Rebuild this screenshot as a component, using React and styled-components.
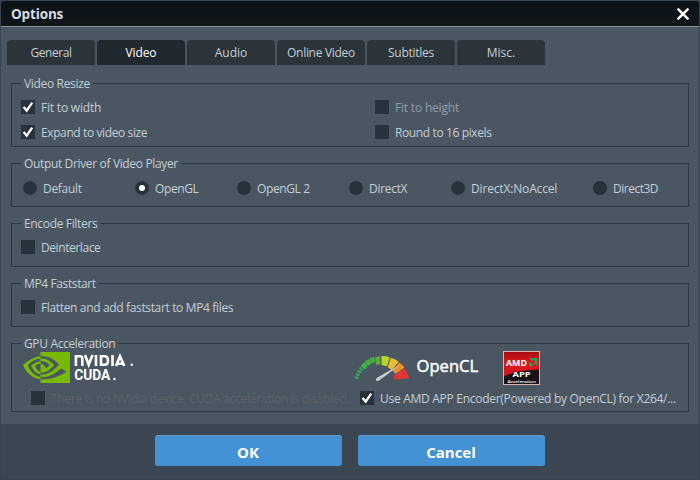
import React from 'react';
import styled, { createGlobalStyle } from 'styled-components';
import { SiNvidia } from 'react-icons/si';

const GlobalStyle = createGlobalStyle`
  body {
    margin: 0;
    background: #35424d;
    font: 12px/15px "Open Sans", "Noto Sans", sans-serif;
    color: #c4ced6;
  }
  * { box-sizing: border-box; }
`;

const Dialog = styled.div`
  width: 700px;
  height: 480px;
  padding: 1px;
  background: #37444f;
  display: flex;
  flex-direction: column;
`;

const TitleBar = styled.header`
  height: 26px;
  flex: none;
  padding: 0 9px 0 10px;
  display: flex;
  align-items: center;
  justify-content: space-between;
  background: linear-gradient(#0c1319, #10161a);
  border-bottom: 1px solid #8b9399;
  border-radius: 3px 3px 0 0;
`;

const Title = styled.h1`
  margin: 0;
  font-size: 13.5px;
  line-height: 20px;
  padding-top: 1px;
  font-weight: 700;
  letter-spacing: -0.15px;
  color: #d7dde0;
`;

const CloseButton = styled.button`
  width: 14px;
  height: 14px;
  padding: 0;
  border: 0;
  margin-top: 1px;
  background: none;
  color: #fff;
  display: block;
  svg { display: block; }
`;

const Body = styled.main`
  height: 397px;
  flex: none;
  padding: 13px 10px 0;
  background: #4a5763;
  border-right: 1px solid #45525d;
  display: flex;
  flex-direction: column;
`;

const TabBar = styled.nav`
  display: flex;
  gap: 2px;
  margin: 0 0 11px -4px;
`;

const Tab = styled.button`
  width: 88px;
  height: 25px;
  padding: 0;
  border: 0;
  border-radius: 4px 4px 0 0;
  font: inherit;
  letter-spacing: ${(p) => p.$track || 0}px;
  color: ${(p) => (p.$active ? '#ffffff' : '#c4ced4')};
  background: ${(p) => (p.$active ? '#20292f' : '#2a343a')};
`;

const Groups = styled.div`
  display: flex;
  flex-direction: column;
  gap: 9px;
`;

const Group = styled.fieldset`
  width: 678px;
  height: ${(p) => p.$height || 51}px;
  min-width: 0;
  margin: 0;
  padding: 0 9px;
  border: 1px solid #2a3741;
`;

const Legend = styled.legend`
  height: 15px;
  margin: 0;
  padding: 0 3px;
  line-height: 15px;
  letter-spacing: ${(p) => p.$track}px;
`;

const CheckGrid = styled.div`
  display: grid;
  grid-template-columns: 354px 1fr;
  grid-auto-rows: 24px;
  row-gap: 1px;
  padding-top: 4px;
`;

const RadioGrid = styled.div`
  display: grid;
  grid-template-columns: 112px 102px 112px 102px 142px 1fr;
  grid-auto-rows: 24px;
  padding: 5px 0 0 2px;
`;

const EncoderGrid = styled.div`
  display: grid;
  grid-template-columns: 329px 1fr;
  grid-auto-rows: 24px;
  padding: 1px 0 0 10px;
`;

const Option = styled.label`
  display: flex;
  align-items: center;
  gap: 6px;
  white-space: nowrap;
  letter-spacing: ${(p) => p.$track}px;
  color: ${(p) => (p.$tone === 'dim' ? '#929ca5' : p.$tone === 'off' ? '#5a6169' : 'inherit')};
`;

const Box = styled.span`
  flex: none;
  width: 14px;
  height: 14px;
  background: #27333c;
  svg { display: block; }
`;

const Dot = styled.span`
  flex: none;
  width: 14px;
  height: 14px;
  border-radius: 50%;
  background: #27333c;
  display: grid;
  place-items: center;
  &::after {
    content: '';
    width: 6px;
    height: 6px;
    border-radius: 50%;
    background: ${(p) => (p.$on ? '#fff' : 'transparent')};
  }
`;

const Logos = styled.div`
  height: 34px;
  display: flex;
  svg { display: block; flex: none; }
`;

const NvidiaLogo = styled.div`
  width: 333px;
  padding: 1px 0 0 2px;
  display: flex;
`;

const NvidiaEye = styled(SiNvidia)`
  width: 47px;
  height: 31px;
`;

const OpenClLogo = styled.div`
  width: 149px;
`;

const Footer = styled.footer`
  flex: 1;
  padding: 11px 0 0 154px;
  display: flex;
  gap: 16px;
  background: #3a4651;
`;

const ActionButton = styled.button`
  width: 187px;
  height: 31px;
  padding: 1px 1px 0 0;
  border: 0;
  border-top: 1px solid #5a9acb;
  border-radius: 3px;
  background: #4492d3;
  color: #fff;
  font: 700 15px/20px "Open Sans", "Noto Sans", sans-serif;
`;

function Check({ on, track, tone, children }) {
  return (
    <Option $track={track} $tone={tone}>
      <Box>
        {on && (
          <svg width="14" height="14" viewBox="0 0 14 14">
            <path d="M2.6 7 5.7 10.6 11.2 2.6" fill="none" stroke="#fff" strokeWidth="2.3" />
          </svg>
        )}
      </Box>
      {children}
    </Option>
  );
}

function Nvidia() {
  return (
    <NvidiaLogo>
      <NvidiaEye viewBox="0 4.06 24 15.88" preserveAspectRatio="none" color="#76b900" />
      <svg width="66" height="31" viewBox="0 0 66 31" fill="#fff">
        <g fill="none" stroke="#fff" strokeWidth="2.6">
          <path d="M5.9 14V4.3H10.2Q12.3 4.3 12.3 6.5V14M15 3 18.7 12.6 22.6 3M26 3V14M31 4.3H34.5Q38 4.3 38 8.5T34.5 12.7H31ZM42.5 3V14M46 14 50 4.3 54.3 14M48.2 11.8H52.5" />
        </g>
        <circle cx="61.8" cy="12.8" r="1.2" />
        <text x="4.2" y="28" fontFamily="Roboto, sans-serif" fontWeight="700" fontSize="14" textLength="36" lengthAdjust="spacingAndGlyphs">CUDA</text>
        <circle cx="44.5" cy="27" r="1.2" />
      </svg>
    </NvidiaLogo>
  );
}

function OpenCl() {
  return (
    <OpenClLogo>
      <svg width="132" height="34" viewBox="354 351 132 34">
        <path d="M356.4 379C358 371 364 363 374 359.4" fill="none" stroke="#35a050" strokeWidth="4" strokeDasharray="2.5 .8" />
        <path d="M363 367.7C366 363.8 370 360.7 374.8 359.3" fill="none" stroke="#47ad43" strokeWidth="5.5" strokeDasharray="4.3 .9" />
        <path d="M375 357.2 380 356.3 380.6 364.2 376.3 365Z" fill="#60ad2d" />
        <path d="M381.2 356.2Q385.7 355.8 390 357.4L386.7 366.5Q384 365.2 381.7 365Z" fill="#b9d42b" />
        <path d="M391 357.8Q395 359 398.7 361.8L391.6 370.3Q389.8 368.5 387.7 367.3Z" fill="#e9bd2d" />
        <path d="M399.4 362.4Q402.3 364.5 404.4 367.6L395.5 374Q394.4 372.1 392.2 370.8Z" fill="#e9912d" />
        <path d="M404.5 368.2Q408.2 373.2 409 378.2L394.6 379.6 393.3 376.2Z" fill="#e43432" />
        <path d="M400.3 364.6 378.4 377.1Q375.2 378.6 376 380.2T379.5 380.3Z" fill="#c9d0d5" />
        <path d="M400.3 364.6 379.5 380.3 378.4 380.8Z" fill="#8d969d" />
        <text x="416.6" y="372.2" fill="#fff" stroke="#fff" strokeWidth=".45" fontFamily="Open Sans, sans-serif" fontWeight="400" fontSize="15.5" textLength="61.5" lengthAdjust="spacingAndGlyphs">OpenCL</text>
      </svg>
    </OpenClLogo>
  );
}

function AmdApp() {
  return (
    <svg width="37" height="34" viewBox="0 0 37 34">
      <defs>
        <linearGradient id="amdRed" x1="0" y1="0" x2="0" y2="1">
          <stop offset="0" stopColor="#a70b10" />
          <stop offset=".35" stopColor="#df1b20" />
          <stop offset="1" stopColor="#b80c12" />
        </linearGradient>
      </defs>
      <rect width="37" height="34" fill="#d8b4b5" />
      <rect x="1" y="1" width="35" height="32" fill="url(#amdRed)" />
      <path d="M1 25.5Q12 19.5 36 18.5V33H1Z" fill="#171315" />
      <text x="3" y="14.6" fill="#fff" fontFamily="Open Sans, sans-serif" fontWeight="700" fontSize="9.5" textLength="21" lengthAdjust="spacingAndGlyphs">AMD</text>
      <path d="M26.2 7H34.2V15L31.8 12.6V9.4H28.6ZM28 10.4V13.3H31L29 15.2H26.2V12.3Z" fill="#20a35b" />
      <text x="9.5" y="26.3" fill="#fff" fontFamily="Open Sans, sans-serif" fontWeight="700" fontSize="6.8" textLength="18" lengthAdjust="spacingAndGlyphs">APP</text>
      <text x="4.5" y="31.7" fill="#fff" fontFamily="Open Sans, sans-serif" fontWeight="600" fontSize="4.3" textLength="28.5" lengthAdjust="spacingAndGlyphs">Acceleration</text>
    </svg>
  );
}

const tabs = [
  ['General', -0.45],
  ['Video', -0.1],
  ['Audio', 0],
  ['Online Video', -0.3],
  ['Subtitles', -0.27],
  ['Misc.', 0],
];

const drivers = [
  ['Default', -0.29],
  ['OpenGL', -0.38],
  ['OpenGL 2', -0.38],
  ['DirectX', -0.3],
  ['DirectX:NoAccel', -0.16],
  ['Direct3D', -0.5],
];

export default function App() {
  return (
    <Dialog>
      <GlobalStyle />
      <TitleBar>
        <Title>Options</Title>
        <CloseButton aria-label="Close">
          <svg width="14" height="14" viewBox="0 0 14 14">
            <path d="M2.3 2.3 11.7 11.7M11.7 2.3 2.3 11.7" fill="none" stroke="currentColor" strokeWidth="2.4" strokeLinecap="round" />
          </svg>
        </CloseButton>
      </TitleBar>
      <Body>
        <TabBar>
          {tabs.map(([name, track]) => (
            <Tab key={name} $active={name === 'Video'} $track={track}>{name}</Tab>
          ))}
        </TabBar>
        <Groups>
          <Group $height={71}>
            <Legend $track={-0.33}>Video Resize</Legend>
            <CheckGrid>
              <Check on track={-0.2}>Fit to width</Check>
              <Check tone="dim" track={-0.19}>Fit to height</Check>
              <Check on track={-0.39}>Expand to video size</Check>
              <Check track={-0.38}>Round to 16 pixels</Check>
            </CheckGrid>
          </Group>
          <Group>
            <Legend $track={-0.35}>Output Driver of Video Player</Legend>
            <RadioGrid>
              {drivers.map(([name, track]) => (
                <Option key={name} $track={track}>
                  <Dot $on={name === 'OpenGL'} />
                  {name}
                </Option>
              ))}
            </RadioGrid>
          </Group>
          <Group>
            <Legend $track={-0.34}>Encode Filters</Legend>
            <CheckGrid>
              <Check track={-0.42}>Deinterlace</Check>
            </CheckGrid>
          </Group>
          <Group>
            <Legend $track={-0.38}>MP4 Faststart</Legend>
            <CheckGrid>
              <Check track={-0.35}>Flatten and add faststart to MP4 files</Check>
            </CheckGrid>
          </Group>
          <Group $height={76}>
            <Legend $track={-0.35}>GPU Acceleration</Legend>
            <Logos>
              <Nvidia />
              <OpenCl />
              <AmdApp />
            </Logos>
            <EncoderGrid>
              <Check tone="off" track={-0.3}>There is no NVidia device, CUDA acceleration is disabled.</Check>
              <Check on track={-0.28}>Use AMD APP Encoder(Powered by OpenCL) for X264/...</Check>
            </EncoderGrid>
          </Group>
        </Groups>
      </Body>
      <Footer>
        <ActionButton>OK</ActionButton>
        <ActionButton>Cancel</ActionButton>
      </Footer>
    </Dialog>
  );
}
